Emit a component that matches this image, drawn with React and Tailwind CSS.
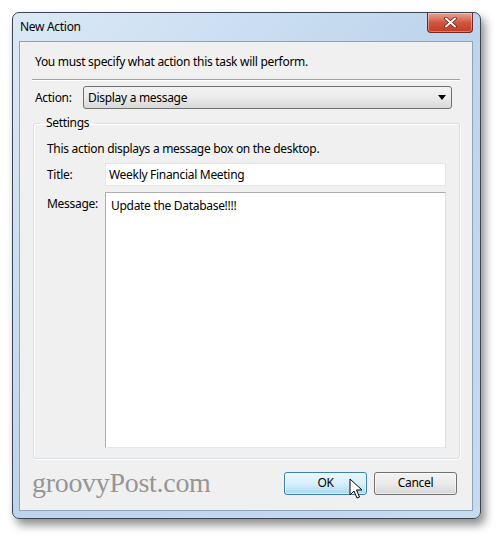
import React from "react";

const ui = { fontFamily: '"Segoe UI", "Noto Sans", "Open Sans", sans-serif' };

const CloseButton = () => (
    <div className="mr-[7px] w-[46px] h-[20px] rounded-b-[4px] border border-t-0 border-[#6d2b22] bg-gradient-to-b from-[#e8a493] via-[#d2563f] to-[#c23a22] flex items-center justify-center shadow-[inset_0_0_0_1px_rgba(255,255,255,0.35)]">
        <svg width="13" height="11" viewBox="0 0 13 11">
            <path d="M2 1.5 L11 9.5 M11 1.5 L2 9.5" stroke="#5a1d14" strokeWidth="3.4" strokeLinecap="round" />
            <path d="M2 1.5 L11 9.5 M11 1.5 L2 9.5" stroke="#ffffff" strokeWidth="2" strokeLinecap="round" />
        </svg>
    </div>
);

const Cursor = () => (
    <svg className="absolute left-[64px] top-[5px]" width="14" height="22" viewBox="0 0 14 22">
        <path d="M1 1 L1 17 L5 13 L8 20 L10.5 19 L7.5 12 L13 12 Z" fill="#ffffff" stroke="#000000" strokeWidth="1" strokeLinejoin="round" />
    </svg>
);

const App = () => {
    return (
        <div className="w-[500px] h-[538px] bg-white pt-[12px] pl-[12px] text-[12px] tracking-[-0.3px] text-black" style={ui}>
            <div className="w-[469px] h-[507px] rounded-[7px] border border-[#3b4653] bg-gradient-to-br from-[#dbe9f7] via-[#bdd4ec] to-[#c7dbf0] flex flex-col shadow-[4px_6px_10px_rgba(0,0,0,0.45)]">
                {/* title bar */}
                <div className="h-[28px] flex items-start justify-between">
                    <span className="pl-[7px] pt-[6px] leading-[16px] text-[12px] text-black">New Action</span>
                    <CloseButton />
                </div>

                {/* client area */}
                <div className="ml-[6px] mr-[7px] mb-[7px] flex-1 border border-[#8ea3ba] bg-[#f0f0f0] flex flex-col">
                    <p className="pt-[12px] pl-[15px] leading-[16px]">You must specify what action this task will perform.</p>

                    <div className="mt-[9px] mx-[12px] h-[2px] border-t border-[#a0a0a0] border-b border-b-white" />

                    <div className="mt-[5px] flex items-center pl-[15px] pr-[20px]">
                        <span className="w-[48px] leading-[16px]">Action:</span>
                        <div className="flex-1 h-[23px] rounded-[3px] border border-[#707070] bg-gradient-to-b from-[#f2f2f2] via-[#ebebeb] to-[#d8d8d8] flex items-center justify-between pl-[4px] pr-[5px]">
                            <span className="leading-[16px]">Display a message</span>
                            <svg width="8" height="5" viewBox="0 0 8 5">
                                <path d="M0 0 L8 0 L4 5 Z" fill="#000000" />
                            </svg>
                        </div>
                    </div>

                    <fieldset className="mt-[6px] ml-[13px] mr-[12px] border border-[#d5dfe5] rounded-[3px] shadow-[inset_1px_1px_0_#ffffff,1px_1px_0_#ffffff] px-[13px] pb-[10px]">
                        <legend className="ml-[-7px] px-[6px] leading-[16px]">Settings</legend>
                        <p className="pt-[10px] leading-[16px]">This action displays a message box on the desktop.</p>

                        <div className="mt-[6px] flex items-center">
                            <span className="w-[58px] leading-[16px]">Title:</span>
                            <div className="flex-1 h-[23px] bg-white border border-[#e3e6e9] flex items-center pl-[3px]">
                                <span className="leading-[16px]">Weekly Financial Meeting</span>
                            </div>
                        </div>

                        <div className="mt-[6px] flex items-start">
                            <span className="w-[58px] pt-[4px] leading-[16px]">Message:</span>
                            <div className="flex-1 h-[256px] bg-white border border-[#abadb3] border-r-[#dbdfe6] border-b-[#e3e9ef] pl-[5px] pt-[4px]">
                                <span className="leading-[16px]">Update the Database!!!!</span>
                            </div>
                        </div>
                    </fieldset>

                    <div className="mt-[10px] flex items-center pl-[12px] pr-[15px]">
                        <span
                            className="flex-1 text-[28px] leading-[28px] text-[#959595] tracking-[-0.3px]"
                            style={{ fontFamily: '"Liberation Serif", "DejaVu Serif", serif' }}
                        >
                            groovyPost.com
                        </span>
                        <div className="relative w-[83px] h-[23px] rounded-[3px] border border-[#3c7fb1] bg-gradient-to-b from-[#eaf6fd] via-[#d9f0fc] to-[#a7d9f5] flex items-center justify-center shadow-[inset_0_0_0_1px_rgba(255,255,255,0.6)]">
                            <span className="leading-[16px]">OK</span>
                            <Cursor />
                        </div>
                        <div className="ml-[7px] w-[83px] h-[23px] rounded-[3px] border border-[#707070] bg-gradient-to-b from-[#f2f2f2] via-[#ebebeb] to-[#d6d6d6] flex items-center justify-center shadow-[inset_0_0_0_1px_rgba(255,255,255,0.6)]">
                            <span className="leading-[16px]">Cancel</span>
                        </div>
                    </div>
                </div>
            </div>
        </div>
    );
};

export default App;
